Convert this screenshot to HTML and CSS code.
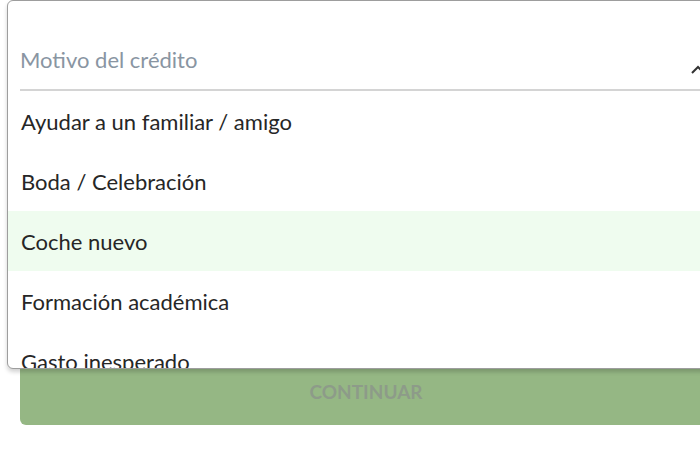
FILE: index.html
```html
<!DOCTYPE html>
<html lang="es">
<head>
<meta charset="UTF-8" />
<meta name="viewport" content="width=device-width, initial-scale=1.0">
<title>Motivo del crédito</title>
<link rel="stylesheet" href="styles.css">
</head>
<body>

<main class="form">
  <!-- Select field, covered by its open menu -->
  <div class="field"></div>

  <button class="btn" disabled>CONTINUAR</button>

  <!-- Open dropdown menu -->
  <div class="menu">
    <div class="menu-head">
      <span class="placeholder">Motivo del crédito</span>
      <svg class="chevron" width="16" height="10" viewBox="0 0 16 10">
        <path d="M2 9 L8 3 L14 9" fill="none" stroke="#333" stroke-width="2"/>
      </svg>
    </div>
    <ul class="options">
      <li>Ayudar a un familiar / amigo</li>
      <li>Boda / Celebración</li>
      <li class="active">Coche nuevo</li>
      <li>Formación académica</li>
      <li>Gasto inesperado</li>
    </ul>
  </div>
</main>

</body>
</html>
```

FILE: styles.css
```css
/* Base styles */
html, body {
  margin: 0;
  padding: 0;
  background: #fff;
  overflow: hidden;
}

body {
  font-family: 'Lato', sans-serif;
  color: #262626;
}

.form {
  position: relative;
  padding: 0 0 0 20px;
  width: 692px;
}

.field {
  height: 357px;
}

/* Disabled continue button */
.btn {
  display: block;
  width: 100%;
  height: 68px;
  border: none;
  border-radius: 6px;
  background: #95b784;
  color: #8d9b89;
  font-family: 'Lato', sans-serif;
  font-weight: 700;
  font-size: 19px;
}

/* Dropdown menu */
.menu {
  position: absolute;
  top: 0;
  left: 7px;
  width: 720px;
  height: 367px;
  background: #fff;
  border: 1px solid #9d9d9d;
  border-radius: 6px;
  overflow: hidden;
  box-shadow: 0 3px 4px rgba(0,0,0,0.18);
}

.menu-head {
  position: relative;
  height: 90px;
  margin-left: 12px;
  border-bottom: 2px solid #d4d4d4;
  display: flex;
  align-items: flex-end;
  padding-bottom: 14px;
  box-sizing: border-box;
}

.placeholder {
  font-size: 22px;
  line-height: 30px;
  color: #8995a2;
}

.chevron {
  position: absolute;
  left: 670px;
  top: 63px;
}

.options {
  list-style: none;
  margin: 0;
  padding: 0;
}

.options li {
  height: 60px;
  display: flex;
  align-items: center;
  padding-left: 13px;
  font-size: 22px;
}

.options li.active {
  background: #effcef;
}
```
